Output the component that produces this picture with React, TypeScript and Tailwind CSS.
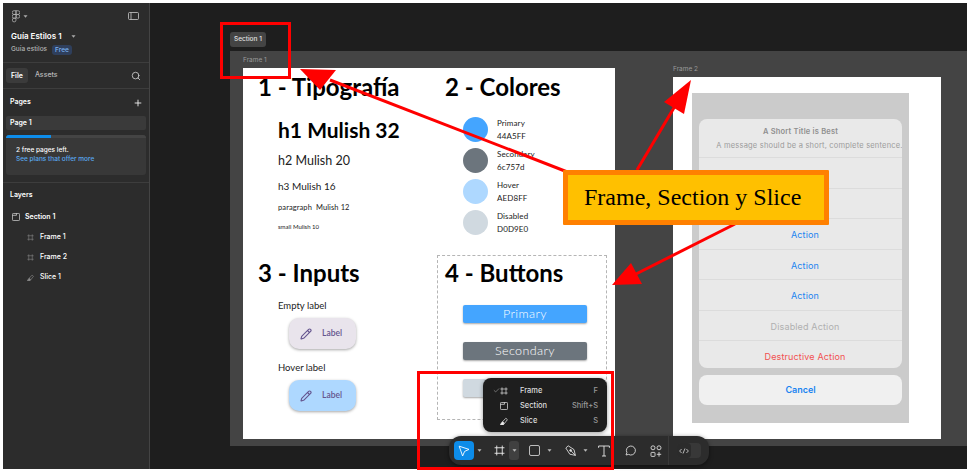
import React from 'react';
import { Plus, Search, Pencil, Check } from 'lucide-react';

const Caret = ({ className = 'text-[#bbbbbb]' }: { className?: string }) => (
  <svg width="5" height="3" viewBox="0 0 5 3" className={className}>
    <path d="M0.5 0.3H4.5L2.5 2.7Z" fill="currentColor" />
  </svg>
);

const FrameIcon = ({ size = 10, color = '#ffffff' }: { size?: number; color?: string }) => (
  <svg width={size} height={size} viewBox="0 0 10 10" fill="none" stroke={color} strokeWidth="0.8">
    <path d="M2.5 0.5V9.5M7.5 0.5V9.5M0.5 2.5H9.5M0.5 7.5H9.5" />
  </svg>
);

const SectionIcon = ({ size = 9, color = '#ffffff' }: { size?: number; color?: string }) => (
  <svg width={size} height={size} viewBox="0 0 9 9" fill="none" stroke={color} strokeWidth="0.8">
    <rect x="0.5" y="0.5" width="8" height="8" rx="1" />
    <path d="M0.5 2.6H5V0.5" />
  </svg>
);

const SliceIcon = ({ size = 9, color = '#ffffff' }: { size?: number; color?: string }) => (
  <svg width={size} height={size} viewBox="0 0 9 9" fill="none" stroke={color} strokeWidth="0.8">
    <path d="M0.5 8.5H4L8.3 3 6.6 1.4 2.6 5.6 0.5 8.5Z" />
    <path d="M0.8 8.3L3 5.4 4.4 6.6 3.8 8.5Z" fill={color} />
  </svg>
);

const FigmaLogo = () => (
  <svg width="8" height="13" viewBox="0 0 9 14" fill="none" stroke="#bdbdbd" strokeWidth="0.8">
    <path d="M4.5 0.5H2.3a2 2 0 0 0 0 4.2H4.5V0.5Z" />
    <path d="M4.5 0.5H6.7a2 2 0 0 1 0 4.2H4.5V0.5Z" />
    <path d="M4.5 4.7H2.3a2 2 0 0 0 0 4.2H4.5V4.7Z" />
    <circle cx="6.6" cy="6.8" r="2.1" />
    <path d="M4.5 8.9H2.3a2.1 2.1 0 1 0 2.2 2.1V8.9Z" />
  </svg>
);

const SidebarToggle = () => (
  <svg width="11" height="8" viewBox="0 0 11 8" fill="none" stroke="#c8c8c8" strokeWidth="0.8">
    <rect x="0.5" y="0.5" width="10" height="7" rx="1" />
    <path d="M3 0.5V7.5" />
  </svg>
);

const Sidebar = () => (
  <aside className="w-[147px] shrink-0 bg-[#2c2c2c] border-r border-[#444444] flex flex-col text-white text-[7px] font-medium">
    <div className="h-[60px] border-b border-[#3d3d3d] px-2 shrink-0">
      <div className="flex items-center justify-between pt-[6px] pl-[1px] pr-[2px] h-[20px]">
        <div className="flex items-center gap-[3px]">
          <FigmaLogo />
          <Caret className="text-[#aaaaaa]" />
        </div>
        <SidebarToggle />
      </div>
      <div className="flex items-center gap-[9px] mt-[8px] text-[8px] font-semibold leading-[10px]">
        <span>Guía Estilos 1</span>
        <Caret className="text-[#aaaaaa]" />
      </div>
      <div className="flex items-center gap-[5px] mt-[4px] text-[6.5px] text-[#b3b3b3]">
        <span>Guía estilos</span>
        <span className="bg-[#2f3f5c] text-[#7cb4f2] rounded-[3px] px-[3px] leading-[10px]">Free</span>
      </div>
    </div>
    <div className="h-[26px] border-b border-[#3d3d3d] flex items-center px-[3px] shrink-0">
      <span className="bg-[#3b3b3b] rounded-[3px] px-[5px] py-[3px] leading-[9px] font-semibold">File</span>
      <span className="ml-[2px] px-[5px] text-[#b8b8b8]">Assets</span>
      <Search size={10} className="ml-auto mr-[5px] text-[#d0d0d0]" />
    </div>
    <div className="h-[94px] border-b border-[#3d3d3d] px-[3px] shrink-0">
      <div className="flex items-center justify-between h-[27px] pl-[4px] pr-[3px] font-semibold">
        <span>Pages</span>
        <Plus size={10} />
      </div>
      <div className="h-[14px] bg-[#3a3a3a] rounded-[2px] flex items-center pl-[4px] font-semibold">Page 1</div>
      <div className="mt-[5px] h-[40px] bg-[#383838] rounded-[3px] overflow-hidden">
        <div className="h-[3px] bg-[#444444]">
          <div className="h-full w-[45px] bg-[#0d8ce9]" />
        </div>
        <div className="pl-[10px] pt-[8px] text-[6.5px] leading-[9px]">
          <div>2 free pages left.</div>
          <div className="text-[#5aa9f0]">See plans that offer more</div>
        </div>
      </div>
    </div>
    <div className="pt-[7px] px-[7px] flex flex-col">
      <div className="font-semibold leading-[10px] mb-[7px]">Layers</div>
      <div className="flex items-center gap-[5px] h-[20px] pl-[2px] font-semibold">
        <SectionIcon size={8} color="#dddddd" />
        <span>Section 1</span>
      </div>
      <div className="flex items-center gap-[6px] h-[20px] pl-[17px]">
        <FrameIcon size={7} color="#8a8a8a" />
        <span>Frame 1</span>
      </div>
      <div className="flex items-center gap-[6px] h-[20px] pl-[17px]">
        <FrameIcon size={7} color="#8a8a8a" />
        <span>Frame 2</span>
      </div>
      <div className="flex items-center gap-[6px] h-[20px] pl-[17px]">
        <SliceIcon size={7} color="#8a8a8a" />
        <span>Slice 1</span>
      </div>
    </div>
  </aside>
);

const Heading = ({ children }: { children: React.ReactNode }) => (
  <h2 className="text-[24px] font-bold leading-[28px] text-black font-['Lato',sans-serif]">{children}</h2>
);

const ColorRow = ({ name, hex, color }: { name: string; hex: string; color: string }) => (
  <div className="flex items-center h-[25px] mb-[6px]">
    <span className={`w-[25px] h-[25px] rounded-full ${color}`} />
    <div className="ml-[9px] pt-[1px] text-[8px] leading-[13px] text-[#222222] tracking-[0.1px]">
      <div>{name}</div>
      <div>{hex}</div>
    </div>
  </div>
);

const InputChip = ({ color }: { color: string }) => (
  <div className={`ml-[11px] w-[67px] h-[31px] rounded-[10px] flex items-center shadow-[0_1px_3px_rgba(0,0,0,0.35)] text-[#65558f] ${color}`}>
    <Pencil size={12} className="ml-[11px]" strokeWidth={2.2} />
    <span className="ml-[10px] text-[8.5px] font-semibold">Label</span>
  </div>
);

const ActionButton = ({ label, color }: { label: string; color: string }) => (
  <div className={`w-[124px] h-[18px] rounded-[2px] flex items-center justify-center text-white text-[12.5px] font-light shadow-[0_1px_2px_rgba(0,0,0,0.35)] tracking-[0.4px] ${color}`}>
    {label}
  </div>
);

const Frame1 = () => (
  <div className="absolute left-[13px] top-[17px] w-[372px] h-[371px] bg-white font-['Lato',sans-serif] text-black">
    <div className="flex">
      <div className="w-[187px] pl-[15px] pt-[5px]">
        <Heading>1 - Tipografía</Heading>
        <div className="pl-[20px]">
          <div className="mt-[17px] text-[21px] font-bold leading-[24px]">h1 Mulish 32</div>
          <div className="mt-[12px] text-[12.5px] leading-[14px] text-[#222222]">h2 Mulish 20</div>
          <div className="mt-[12px] text-[10px] leading-[12px] text-[#222222]">h3 Mulish 16</div>
          <div className="mt-[11px] text-[7.5px] leading-[9px] text-[#222222] tracking-[0.1px]">paragraph&nbsp; Mulish 12</div>
          <div className="mt-[11px] text-[6px] leading-[7px] text-[#222222]">small Mulish 10</div>
        </div>
      </div>
      <div className="pl-[15px] pt-[5px]">
        <Heading>2 - Colores</Heading>
        <div className="pl-[18px] pt-[16px]">
          <ColorRow name="Primary" hex="44A5FF" color="bg-[#44a5ff]" />
          <ColorRow name="Secondary" hex="6c757d" color="bg-[#6c757d]" />
          <ColorRow name="Hover" hex="AED8FF" color="bg-[#aed8ff]" />
          <ColorRow name="Disabled" hex="D0D9E0" color="bg-[#d0d9e0]" />
        </div>
      </div>
    </div>
    <div className="flex mt-[4px]">
      <div className="w-[187px] pl-[15px] pt-[14px]">
        <Heading>3 - Inputs</Heading>
        <div className="pl-[20px] text-[9.5px] text-[#222222]">
          <div className="mt-[13px] leading-[12px] mb-[6px]">Empty label</div>
          <InputChip color="bg-[#e9e4ec]" />
          <div className="mt-[13px] leading-[12px] mb-[6px]">Hover label</div>
          <InputChip color="bg-[#aed8ff]" />
        </div>
      </div>
      <div className="w-[170px] h-[165px] ml-[7px] mt-[10px] border border-dashed border-[#b5b5b5] pl-[7px] pt-[3px]">
        <Heading>4 - Buttons</Heading>
        <div className="pl-[18px] pt-[18px] flex flex-col gap-[19px]">
          <ActionButton label="Primary" color="bg-[#44a5ff]" />
          <ActionButton label="Secondary" color="bg-[#6c757d]" />
          <ActionButton label="" color="bg-[#d0d9e0]" />
        </div>
      </div>
    </div>
  </div>
);

const SheetRow = ({ label = '', color = 'text-[#1a84f0]' }: { label?: string; color?: string }) => (
  <div className={`h-[30.5px] border-t border-[#dcdcdc] flex items-center justify-center pt-[2px] pl-[9px] text-[9px] tracking-[0.15px] ${color}`}>{label}</div>
);

const Frame2 = () => (
  <div className="absolute left-[443px] top-[26px] w-[268px] h-[362px] bg-white pl-[19px] pt-[16px] font-['Inter',sans-serif]">
    <div className="w-[217px] h-[330px] bg-[#cbcbcb] px-[7px] pt-[26px]">
      <div className="bg-[#e9e9e9] rounded-[8px] overflow-hidden h-[249px]">
        <div className="h-[38px] flex flex-col items-center pt-[8px]">
          <div className="text-[7.5px] font-semibold text-[#8f8f8f] leading-[10px] tracking-[0.2px]">A Short Title is Best</div>
          <div className="text-[7.5px] text-[#9b9b9b] leading-[10px] mt-[4px] pl-[18px] tracking-[0.2px] whitespace-nowrap">A message should be a short, complete sentence.</div>
        </div>
        {/* first two rows sit behind the callout */}
        <SheetRow />
        <SheetRow />
        <SheetRow label="Action" />
        <SheetRow label="Action" />
        <SheetRow label="Action" />
        <SheetRow label="Disabled Action" color="text-[#b0b0b0]" />
        <SheetRow label="Destructive Action" color="text-[#f25050]" />
      </div>
      <div className="mt-[7px] h-[30px] bg-[#f0f0f0] rounded-[8px] flex items-center justify-center text-[#1a84f0] text-[9px] font-semibold">Cancel</div>
    </div>
  </div>
);

const MenuRow = ({ icon, label, keys, checked }: { icon: React.ReactNode; label: string; keys: string; checked?: boolean }) => (
  <div className="flex items-center h-[15px] text-[7.5px] text-[#dddddd] font-medium">
    <span className="w-[8px] flex justify-center text-[#aaaaaa]">{checked && <Check size={7} />}</span>
    <span className="w-[8px] flex justify-center">{icon}</span>
    <span className="ml-[12px]">{label}</span>
    <span className="ml-auto text-[#999999]">{keys}</span>
  </div>
);

const Toolbar = () => (
  <div className="absolute left-[449px] top-[436px] w-[260px] h-[29px] bg-[#2c2c2c] rounded-[12px] shadow-[0_1px_4px_rgba(0,0,0,0.5)] flex items-center pl-[5px] text-[#e0e0e0]">
    <div className="w-[20px] h-[19px] rounded-[4px] bg-[#0d8ce9] flex items-center justify-center">
      <svg width="12" height="12" viewBox="0 0 12 12" fill="none" stroke="#ffffff" strokeWidth="0.9" strokeLinejoin="round">
        <path d="M1.2 1.2L11 4.4 6.6 6.4 4.6 11 1.2 1.2Z" />
      </svg>
    </div>
    <span className="ml-[3px]"><Caret /></span>
    <span className="ml-[12px]"><FrameIcon size={11} color="#f0f0f0" /></span>
    <div className="ml-[4px] w-[10px] h-[19px] rounded-[3px] bg-[#404040] flex items-center justify-center"><Caret /></div>
    <div className="ml-[10px] w-[11px] h-[11px] rounded-[2px] border border-[#bcbcbc]" />
    <span className="ml-[7px]"><Caret /></span>
    <svg width="11" height="11" viewBox="0 0 11 11" fill="none" stroke="#dddddd" strokeWidth="0.9" strokeLinejoin="round" className="ml-[13px]">
      <path d="M0.8 3L3.2 0.8 9 4.6 10.4 10.4 4.8 9.2Z" />
      <circle cx="5.6" cy="5.4" r="0.9" fill="#dddddd" />
      <path d="M6.2 6L10.4 10.4" />
    </svg>
    <span className="ml-[7px]"><Caret /></span>
    <svg width="12" height="12" viewBox="0 0 12 12" fill="none" stroke="#e8e8e8" strokeWidth="0.9" className="ml-[10px]">
      <path d="M0.6 2.8V1H11.4V2.8M6 1V11M4 11H8" />
    </svg>
    <svg width="11" height="11" viewBox="0 0 11 11" fill="none" stroke="#dddddd" strokeWidth="0.9" className="ml-[15px]">
      <path d="M1 10L1.9 7.6A4.5 4.5 0 1 1 3.6 9.4Z" strokeLinejoin="round" />
    </svg>
    <svg width="12" height="12" viewBox="0 0 12 12" fill="none" stroke="#dddddd" strokeWidth="0.9" className="ml-[14px]">
      <circle cx="3" cy="2.8" r="2" />
      <circle cx="9" cy="2.8" r="2" />
      <rect x="1" y="7.4" width="4" height="4" rx="0.6" />
      <path d="M9 7V11.6M6.8 9.3H11.2" />
    </svg>
    <div className="ml-[6px] h-full border-l border-[#3a3a3a]" />
    <div className="ml-[8px] w-[24px] h-[15px] rounded-[4px] bg-[#383838]">
      <div className="w-[14px] h-[15px] rounded-[4px] bg-[#2b2b2b] flex items-center justify-center">
        <svg width="10" height="6" viewBox="0 0 10 6" fill="none" stroke="#dddddd" strokeWidth="0.8">
          <path d="M2.6 1L0.6 3 2.6 5M7.4 1L9.4 3 7.4 5M6 0.5L4 5.5" />
        </svg>
      </div>
    </div>
  </div>
);

const Arrows = () => (
  <svg width="969" height="471" viewBox="0 0 969 471" className="absolute inset-0 pointer-events-none">
    <path d="M330 80L570 173" stroke="#ff0000" strokeWidth="3" />
    <path d="M300 69L336 70 320 90Z" fill="#ff0000" />
    <path d="M637 170L675 106" stroke="#ff0000" strokeWidth="3" />
    <path d="M691 80L664 102 684 114Z" fill="#ff0000" />
    <path d="M735 224L636 274" stroke="#ff0000" strokeWidth="3" />
    <path d="M612 285L631 263 642 284Z" fill="#ff0000" />
  </svg>
);

export default function App() {
  return (
    <div className="relative w-[969px] h-[471px] bg-white overflow-hidden pl-[3px] pr-[2px] pt-[3px] pb-[2px] font-['Inter',sans-serif]">
      <div className="flex h-full">
        <Sidebar />
        <main className="relative flex-1 bg-[#1e1e1e]">
          <div className="absolute left-[80px] top-[29px] bg-[#444444] rounded-[3px] h-[15px] px-[4px] flex items-center text-[6.5px] font-medium text-[#e0e0e0]">Section 1</div>
          <div className="absolute left-[80px] top-[48px] right-0 h-[395px] bg-[#444444]">
            <span className="absolute left-[13px] top-[5px] text-[6.5px] text-[#9a9a9a]">Frame 1</span>
            <span className="absolute left-[443px] top-[14px] text-[6.5px] text-[#9a9a9a]">Frame 2</span>
            <Frame1 />
            <Frame2 />
          </div>
        </main>
      </div>

      <Arrows />

      <div className="absolute left-[220px] top-[22px] w-[71px] h-[57px] border-[3px] border-[#ff0000]" />

      <div className="absolute left-[563px] top-[170px] w-[266px] h-[55px] bg-[#ffc000] border-[5px] border-[#ff8000] rounded-[1px] flex items-center pl-[16px] pb-[2px] text-[24px] text-black font-['Liberation_Serif',serif] whitespace-nowrap">
        Frame, Section y Slice
      </div>

      <div className="absolute left-[483px] top-[378px] w-[124px] h-[54px] bg-[#1e1e1e] rounded-[8px] shadow-[0_1px_4px_rgba(0,0,0,0.4)] px-[9px] pt-[5px]">
        <MenuRow checked icon={<FrameIcon size={8} color="#eeeeee" />} label="Frame" keys="F" />
        <MenuRow icon={<SectionIcon size={8} color="#eeeeee" />} label="Section" keys="Shift+S" />
        <MenuRow icon={<SliceIcon size={8} color="#eeeeee" />} label="Slice" keys="S" />
      </div>

      <Toolbar />

      <div className="absolute left-[417px] top-[371px] w-[197px] h-[99px] border-[3px] border-[#ff0000] pointer-events-none" />
    </div>
  );
}
